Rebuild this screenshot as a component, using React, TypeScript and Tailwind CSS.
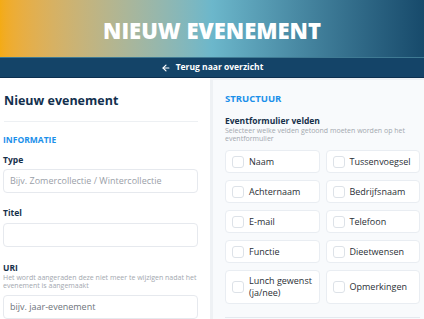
import { ArrowLeft } from "lucide-react";

const fields: string[][] = [
	["Naam", "Tussenvoegsel"],
	["Achternaam", "Bedrijfsnaam"],
	["E-mail", "Telefoon"],
	["Functie", "Dieetwensen"],
	["Lunch gewenst (ja/nee)", "Opmerkingen"],
];

function FieldCard({ label }: { label: string }) {
	return (
		<div className="flex items-center gap-[5px] min-h-[23px] py-[4px] px-[6px] bg-white border border-[#e9edf2] rounded-[4px]">
			<span className="shrink-0 w-[12px] h-[12px] rounded-[3px] border border-[#dde2e8] bg-white" />
			<span className="text-[9px] leading-[12px] text-[#2a2f36]">{label}</span>
		</div>
	);
}

function Input({ placeholder, dark }: { placeholder?: string; dark?: boolean }) {
	return (
		<div className="h-[24px] w-full rounded-[4px] border border-[#e6e9ee] bg-white flex items-center px-[6px]">
			<span className={`text-[9px] ${dark ? "text-[#6e737b]" : "text-[#9aa0a8]"}`}>
				{placeholder}
			</span>
		</div>
	);
}

export default function App() {
	return (
		<div
			className="w-[424px] h-[319px] overflow-hidden bg-[#eef1f4] flex flex-col"
			style={{ fontFamily: '"Open Sans", "Liberation Sans", sans-serif' }}
		>
			{/* Header */}
			<div className="h-[57px] shrink-0 flex items-center justify-center bg-gradient-to-r from-[#f4ab15] via-[#6cb7cb] to-[#174a6b]">
				<h1 className="text-white font-extrabold text-[22px] leading-none mt-[2px]">
					NIEUW EVENEMENT
				</h1>
			</div>
			<div className="h-[21px] shrink-0 bg-[#144468] border-t border-[#3f7a93] border-b border-b-[#0c3050] flex items-center justify-center gap-[5px] text-white">
				<ArrowLeft size={10} strokeWidth={2.75} />
				<span className="text-[8.5px] font-bold">Terug naar overzicht</span>
			</div>

			{/* Body */}
			<div className="flex flex-1 gap-[3px] min-h-0">
				<div className="w-[210px] shrink-0 bg-white pl-[3px] pr-[12px] pt-[14px]">
					<h2 className="text-[12.5px] font-bold text-[#12304e] leading-[18px] pl-[1px]">Nieuw evenement</h2>
					<div className="h-px bg-[#edf0f3] mt-[11px] ml-[1px]" />
					<div className="mt-[11px] text-[8.5px] font-bold text-[#1b90ea] leading-[14px]">INFORMATIE</div>

					<div className="mt-[7px] text-[8.5px] font-bold text-[#16304a] leading-[12px]">Type</div>
					<div className="mt-[3px]">
						<Input placeholder="Bijv. Zomercollectie / Wintercollectie" />
					</div>

					<div className="mt-[14px] text-[8.5px] font-bold text-[#16304a] leading-[12px]">Titel</div>
					<div className="mt-[4px]">
						<Input />
					</div>

					<div className="mt-[15px] text-[8.5px] font-bold text-[#16304a] leading-[12px]">URI</div>
					<p className="text-[7px] leading-[8px] text-[#a3a8af]">
						Het wordt aangeraden deze niet meer te wijzigen nadat het evenement is aangemaakt
					</p>
					<div className="mt-[5px]">
						<Input placeholder="bijv. jaar-evenement" dark />
					</div>
				</div>

				<div className="flex-1 bg-[#f8fafc] mt-[2px] pl-[12px] pr-[4px] pt-[12px]">
					<div className="text-[9.5px] font-bold text-[#1b90ea] leading-[14px]">STRUCTUUR</div>
					<div className="mt-[9px] text-[8.5px] font-bold text-[#16304a] leading-[12px]">
						Eventformulier velden
					</div>
					<p className="text-[7px] leading-[8px] text-[#a3a8af]">
						Selecteer welke velden getoond moeten worden op het eventformulier
					</p>
					<div className="mt-[7px] grid grid-cols-2 gap-x-[6px] gap-y-[7px]">
						{fields.flat().map((f) => (
							<FieldCard key={f} label={f} />
						))}
					</div>
					<div className="mt-[13px] h-px bg-[#e4e9ef]" />
				</div>
			</div>
		</div>
	);
}
